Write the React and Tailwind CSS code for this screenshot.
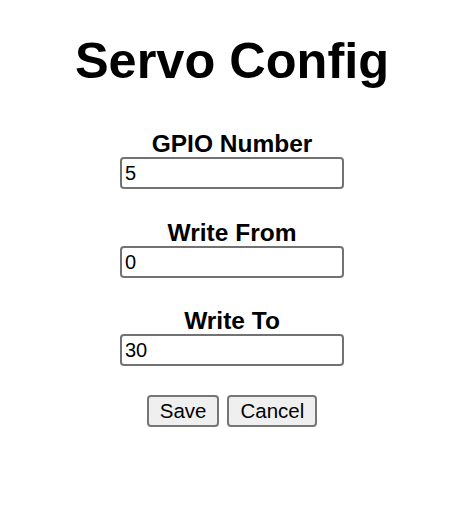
export default function App() {
  const font = { fontFamily: '"Liberation Sans", Arial, sans-serif' };
  const Field = ({ label, value, top }) => (
    <div className={`flex flex-col items-center ${top}`}>
      <div className="text-[24.5px] font-bold leading-[27px] text-black">{label}</div>
      <input
        readOnly
        value={value}
        className="w-[224px] h-[32px] border-2 border-[#727272] rounded-[4px] px-[3px] text-[20px] text-black bg-white outline-none"
        style={font}
      />
    </div>
  );
  return (
    <div className="w-[464px] min-h-[532px] bg-white flex flex-col items-center" style={font}>
      <h1 className="mt-[31.5px] text-[50.5px] font-bold leading-[58px] text-black">Servo Config</h1>
      <Field label="GPIO Number" value="5" top="mt-[40.5px]" />
      <Field label="Write From" value="0" top="mt-[30px]" />
      <Field label="Write To" value="30" top="mt-[29px]" />
      <div className="mt-[29px] flex gap-[8px]">
        <button className="h-[32px] px-[11px] border-2 border-[#767676] rounded-[4px] bg-[#efefef] text-[20.5px] leading-[24px] text-black" style={font}>Save</button>
        <button className="h-[32px] px-[11px] border-2 border-[#767676] rounded-[4px] bg-[#efefef] text-[20.5px] leading-[24px] text-black" style={font}>Cancel</button>
      </div>
    </div>
  );
}
